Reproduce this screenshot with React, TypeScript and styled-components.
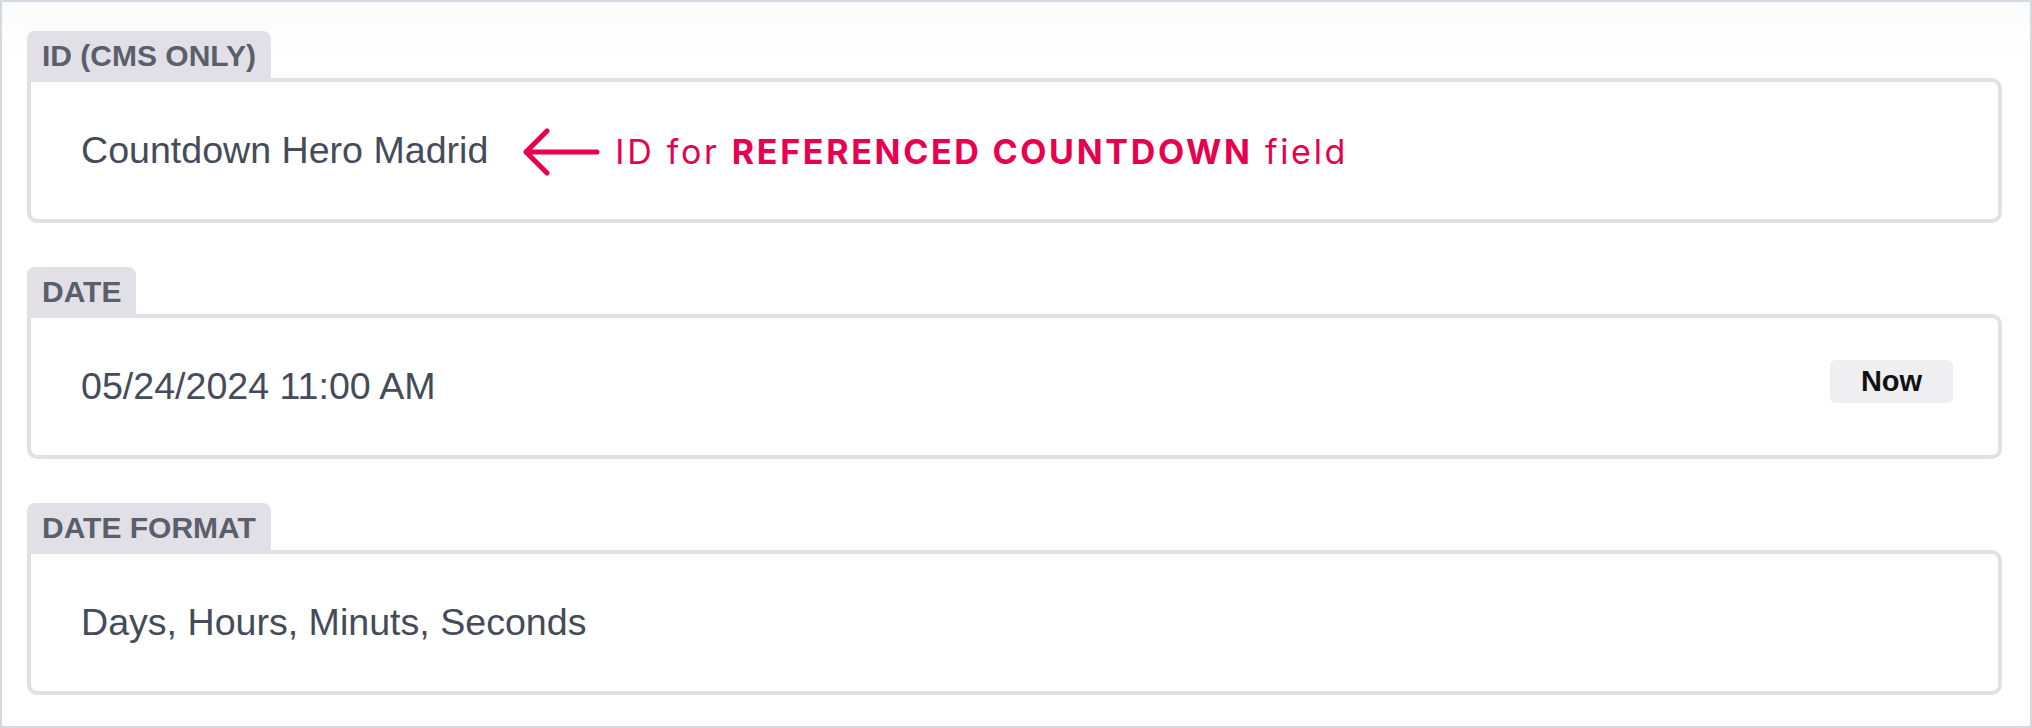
import React from "react";
import styled, { createGlobalStyle } from "styled-components";

const Global = createGlobalStyle`
  html, body { margin: 0; padding: 0; background: #fff; }
  * { box-sizing: border-box; }
`;

const Frame = styled.div`
  width: 2032px;
  height: 728px;
  border: 2px solid #d3d9e0;
  background: linear-gradient(#fafafa, #ffffff 60px);
  padding: 29px 28px 0 25px;
  display: flex;
  flex-direction: column;
  gap: 44px;
  font-family: "Liberation Sans", Arial, sans-serif;
`;

const Field = styled.section`
  display: flex;
  flex-direction: column;
  align-items: flex-start;
`;

const Tab = styled.div`
  height: 47px;
  padding: 2px 15px 0 15px;
  background: #e0e0e6;
  border-radius: 8px 8px 0 0;
  color: #5b5f6b;
  font-size: 30px;
  font-weight: 700;
  line-height: 45px;
  white-space: nowrap;
`;

const Box = styled.div`
  align-self: stretch;
  height: 145px;
  border: 4px solid #e0e0e6;
  border-radius: 0 10px 10px 10px;
  background: #fff;
  display: flex;
  align-items: center;
  justify-content: space-between;
  padding: 0 45px 0 50px;
`;

const Value = styled.div`
  display: flex;
  align-items: center;
  color: #454b58;
  font-size: 37.6px;
  line-height: 1;
  white-space: nowrap;
`;

const Note = styled.div`
  display: flex;
  align-items: center;
  margin-left: 34px;
  margin-top: 3px;
  color: #e8004f;
  font-family: Inter, "Open Sans", sans-serif;
  font-size: 34px;
  font-weight: 400;
  letter-spacing: 2.7px;
  white-space: nowrap;
  gap: 15px;

  b {
    font-weight: 700;
  }
`;

const NowButton = styled.button`
  width: 123px;
  height: 43px;
  margin-top: -10px;
  border: none;
  border-radius: 6px;
  background: #efeff2;
  color: #111;
  font-family: "Liberation Sans", Arial, sans-serif;
  font-size: 29px;
  font-weight: 700;
  padding: 0;
  cursor: pointer;
`;

const Arrow = () => (
  <svg width="78" height="48" viewBox="0 0 78 48" fill="none">
    <path
      d="M4 24 H75 M25 3 L4 24 L25 45"
      stroke="#e8004f"
      strokeWidth="5"
      strokeLinecap="round"
      strokeLinejoin="round"
    />
  </svg>
);

export default function App() {
  return (
    <>
      <Global />
      <Frame>
        <Field>
          <Tab>ID (CMS ONLY)</Tab>
          <Box>
            <Value>
              Countdown Hero Madrid
              <Note>
                <Arrow />
                <span>
                  ID for <b>REFERENCED COUNTDOWN</b> field
                </span>
              </Note>
            </Value>
          </Box>
        </Field>
        <Field>
          <Tab>DATE</Tab>
          <Box>
            <Value>05/24/2024 11:00 AM</Value>
            <NowButton>Now</NowButton>
          </Box>
        </Field>
        <Field>
          <Tab>DATE FORMAT</Tab>
          <Box>
            <Value>Days, Hours, Minuts, Seconds</Value>
          </Box>
        </Field>
      </Frame>
    </>
  );
}
